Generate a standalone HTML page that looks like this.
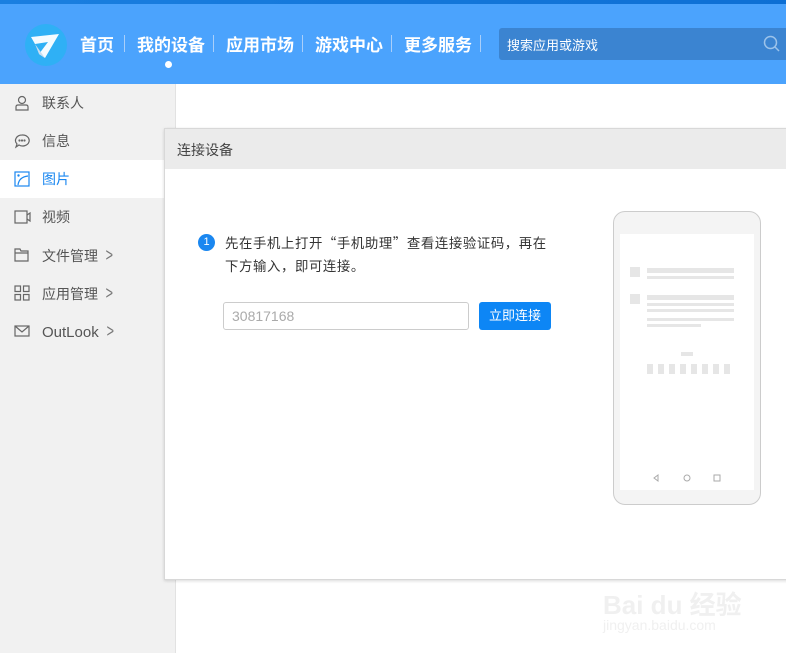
<!DOCTYPE html>
<html><head><meta charset="utf-8"><style>
*{margin:0;padding:0;box-sizing:border-box}
body{width:786px;height:653px;overflow:hidden;position:relative;background:#fff;font-family:"Liberation Sans","Noto Sans CJK SC",sans-serif}
.top{position:absolute;left:0;top:0;width:786px;height:4px;background:linear-gradient(90deg,#1a7fe0,#0d6fd4)}
.hdr{position:absolute;left:0;top:4px;width:786px;height:80px;background:#4ba3fd}
.logo{position:absolute;left:25px;top:20px;width:42px;height:42px;border-radius:50%;background:#2fb0f5}
.nav{position:absolute;top:31px;color:#fff;font-size:17px;font-weight:bold}
.sep{position:absolute;top:35px;width:1px;height:17px;background:#a9cffa}
.dot{position:absolute;left:165px;top:61px;width:7px;height:7px;border-radius:50%;background:#fff}
.search{position:absolute;left:499px;top:28px;width:290px;height:32px;background:#3b84d1;border-radius:3px;color:#fff;font-size:13px;padding:7px 8px}
.side{position:absolute;left:0;top:84px;width:176px;height:569px;background:#f1f1f1;border-right:1px solid #e2e2e2}
.item{position:absolute;left:0;width:164px;height:38px;font-size:14px;color:#555;padding-left:42px;line-height:38px}
.item svg{position:absolute;left:14px;top:11px}
.item.sel{background:#fff;color:#1a87f0}
.arr{display:inline-block;margin-left:6px;color:#777;font-size:18px;transform:scaleX(.7)}
.dlg{position:absolute;left:164px;top:128px;width:630px;height:452px;background:#fff;border:1px solid #d8d8d8;box-shadow:0 1px 3px rgba(0,0,0,.15)}
.dh{height:40px;background:#ebebeb;font-size:14px;color:#444;padding:11px 12px}
.num{position:absolute;left:33px;top:105px;width:17px;height:17px;border-radius:50%;background:#1a87f0;color:#fff;font-size:11px;text-align:center;line-height:17px}
.txt{position:absolute;left:60px;top:102px;white-space:nowrap;font-size:13.4px;letter-spacing:.6px;color:#333;line-height:23px;font-family:"Noto Sans CJK SC",sans-serif}
.inp{position:absolute;left:58px;top:173px;width:246px;height:28px;border:1px solid #ccc;border-radius:3px;color:#aaa;font-size:14px;padding:5px 8px}
.btn{position:absolute;left:314px;top:173px;width:72px;height:28px;background:#0d86f5;border-radius:3px;color:#fff;font-size:13px;text-align:center;line-height:28px}
.ph{position:absolute;left:448px;top:82px;width:148px;height:294px;border:1px solid #ccc;border-radius:12px;background:#f4f4f4}
.scr{position:absolute;left:6px;top:22px;width:134px;height:256px;background:#fff}
.g{position:absolute;background:#e6e6e6}
</style></head><body>
<div class="top"></div>
<div class="hdr">
<div class="logo"><svg width="42" height="42" viewBox="0 0 42 42"><path d="M6 13 L34 10 L20 34 L14 30 L23 18 L10 20 Z" fill="#fff" opacity=".95"/><path d="M10 20 L14 30 L20 34" fill="#c8ddf0"/></svg></div>
</div>
<div class="nav" style="left:80px">首页</div>
<div class="sep" style="left:124px"></div>
<div class="nav" style="left:137px">我的设备</div>
<div class="sep" style="left:213px"></div>
<div class="nav" style="left:226px">应用市场</div>
<div class="sep" style="left:302px"></div>
<div class="nav" style="left:315px">游戏中心</div>
<div class="sep" style="left:391px"></div>
<div class="nav" style="left:404px">更多服务</div>
<div class="sep" style="left:480px"></div>
<div class="dot"></div>
<div class="search">搜索应用或游戏<svg style="position:absolute;left:264px;top:7px" width="17" height="17" viewBox="0 0 17 17"><circle cx="7.5" cy="7.5" r="6" fill="none" stroke="#9cc3ea" stroke-width="1.5"/><path d="M12 12 L16 16" stroke="#9cc3ea" stroke-width="1.5"/></svg></div>
<div class="side">
<div class="item" style="top:0"><svg width="16" height="16" viewBox="0 0 16 16" fill="none" stroke="#666" stroke-width="1.2"><circle cx="8" cy="5" r="3.5"/><path d="M2 15 v-3 q0-2 2-2 h8 q2 0 2 2 v3 z"/></svg>联系人</div>
<div class="item" style="top:38px"><svg width="16" height="16" viewBox="0 0 16 16" fill="none" stroke="#666" stroke-width="1.2"><path d="M8 2 a6.5 5.5 0 1 1 -3 10 l-3 2 1-3 a6.5 5.5 0 0 1 5-9z"/><circle cx="5.5" cy="7.5" r=".5"/><circle cx="8" cy="7.5" r=".5"/><circle cx="10.5" cy="7.5" r=".5"/></svg>信息</div>
<div class="item sel" style="top:76px"><svg width="16" height="16" viewBox="0 0 16 16" fill="none" stroke="#1a87f0" stroke-width="1.2"><rect x="1" y="1" width="14" height="14"/><path d="M4 14 q1-8 10-9"/><circle cx="4.5" cy="4.5" r=".6"/></svg>图片</div>
<div class="item" style="top:114px"><svg width="18" height="16" viewBox="0 0 18 16" fill="none" stroke="#666" stroke-width="1.2"><rect x="1" y="2" width="12" height="12"/><path d="M13 6 l3-2 v8 l-3-2"/></svg>视频</div>
<div class="item" style="top:152px"><svg width="16" height="16" viewBox="0 0 16 16" fill="none" stroke="#666" stroke-width="1.2"><path d="M1 2 h5 l1 2 h7 v10 h-13z M1 6 h13"/></svg>文件管理<span class="arr">&gt;</span></div>
<div class="item" style="top:190px"><svg width="16" height="16" viewBox="0 0 16 16" fill="none" stroke="#666" stroke-width="1.2"><rect x="1" y="1" width="5.5" height="5.5"/><rect x="9.5" y="1" width="5.5" height="5.5"/><rect x="1" y="9.5" width="5.5" height="5.5"/><rect x="9.5" y="9.5" width="5.5" height="5.5"/></svg>应用管理<span class="arr">&gt;</span></div>
<div class="item" style="top:228px;font-size:15px"><svg width="16" height="16" viewBox="0 0 16 16" fill="none" stroke="#666" stroke-width="1.2"><rect x="1" y="3" width="14" height="10"/><path d="M1 3 l7 6 7-6"/></svg>OutLook<span class="arr">&gt;</span></div>
</div>
<div class="dlg">
<div class="dh">连接设备</div>
<div class="num">1</div>
<div class="txt">先在手机上打开“手机助理”查看连接验证码，再在<br>下方输入，即可连接。</div>
<div class="inp">30817168</div>
<div class="btn">立即连接</div>
<div class="ph"><div class="scr">
<div class="g" style="left:10px;top:33px;width:10px;height:10px"></div>
<div class="g" style="left:27px;top:34px;width:87px;height:5px"></div>
<div class="g" style="left:27px;top:42px;width:87px;height:3px"></div>
<div class="g" style="left:10px;top:60px;width:10px;height:10px"></div>
<div class="g" style="left:27px;top:61px;width:87px;height:5px"></div>
<div class="g" style="left:27px;top:69px;width:87px;height:3px"></div>
<div class="g" style="left:27px;top:75px;width:87px;height:3px"></div>
<div class="g" style="left:27px;top:84px;width:87px;height:3px"></div>
<div class="g" style="left:27px;top:90px;width:54px;height:3px"></div>
<div class="g" style="left:61px;top:118px;width:12px;height:4px"></div>
<div style="position:absolute;left:27px;top:130px;display:flex;gap:5px"><i class="g" style="position:static;width:6px;height:10px"></i><i class="g" style="position:static;width:6px;height:10px"></i><i class="g" style="position:static;width:6px;height:10px"></i><i class="g" style="position:static;width:6px;height:10px"></i><i class="g" style="position:static;width:6px;height:10px"></i><i class="g" style="position:static;width:6px;height:10px"></i><i class="g" style="position:static;width:6px;height:10px"></i><i class="g" style="position:static;width:6px;height:10px"></i></div>
<svg style="position:absolute;left:30px;top:239px" width="80" height="10" viewBox="0 0 80 10" fill="none" stroke="#aaa" stroke-width="1"><path d="M8 2 L4 5 L8 8Z"/><circle cx="37" cy="5" r="3"/><rect x="64" y="2" width="6" height="6"/></svg>
</div></div>
</div>
<div style="position:absolute;left:603px;top:585px;font-size:26px;color:#f0f0f0;font-weight:bold">Bai du 经验</div>
<div style="position:absolute;left:603px;top:617px;font-size:14px;color:#f0f0f0">jingyan.baidu.com</div>
</body></html>
